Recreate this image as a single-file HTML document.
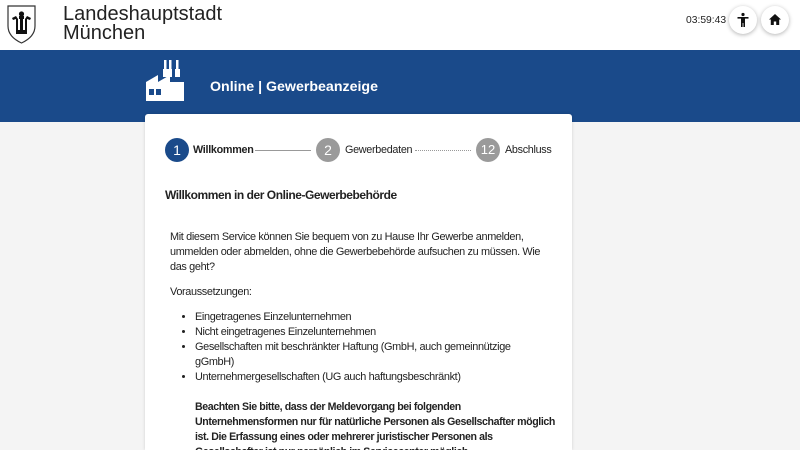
<!DOCTYPE html>
<html><head><meta charset="utf-8"><style>
*{margin:0;padding:0;box-sizing:border-box}
html,body{width:800px;height:450px;overflow:hidden}
body{background:#f4f4f4;font-family:"Liberation Sans",sans-serif;color:#222;position:relative}
.top{position:absolute;left:0;top:0;width:800px;height:50px;background:#fff}
.city{position:absolute;left:63px;top:5px;font-size:20px;line-height:19px;color:#222}
.time{position:absolute;left:686px;top:15px;font-size:10.3px;color:#222}
.btn{position:absolute;top:6px;width:28px;height:28px;border-radius:50%;background:#fff;box-shadow:0 1px 4px rgba(0,0,0,.3)}
.banner{position:absolute;left:0;top:50px;width:800px;height:72px;background:#1a4a8a}
.btitle{position:absolute;left:210px;top:79px;color:#fff;font-weight:bold;font-size:14.2px}
.card{position:absolute;left:145px;top:114px;width:427px;height:336px;background:#fff;box-shadow:0 0 3px rgba(0,0,0,.15);border-radius:3px 3px 0 0}
.c{position:absolute;width:24px;height:24px;border-radius:50%;color:#fff;font-size:14px;text-align:center;line-height:24px}
.sl{position:absolute;font-size:10.8px;letter-spacing:-0.3px}
p,li{font-size:10.9px;line-height:15px;white-space:nowrap;letter-spacing:-0.35px}
</style></head><body>
<div class="top">
<svg style="position:absolute;left:6px;top:4px" width="31" height="40" viewBox="0 0 31 40"><path d="M2 2H29V22C29 31 22 36 15.5 39C9 36 2 31 2 22Z" fill="#fff" stroke="#333" stroke-width="1.2"/><path d="M6 14L10 12L12 15V26H14V15h3V26h2V15L21 12L25 14L24 16L21 15V30H10V15L7 16Z" fill="#111"/><circle cx="15.5" cy="10" r="2.6" fill="#111"/><path d="M13 12h5v3h-5z" fill="#111"/></svg>
<div class="city">Landeshauptstadt<br>München</div>
<div class="time">03:59:43</div>
<div class="btn" style="left:729px"><svg width="28" height="28" viewBox="0 0 28 28"><circle cx="14" cy="8.5" r="1.6" fill="#111"/><path d="M8.5 11h11v1.6h-3.5V21h-1.6v-4h-0.8v4h-1.6v-8.4H8.5z" fill="#111"/></svg></div>
<div class="btn" style="left:761px"><svg width="28" height="28" viewBox="0 0 28 28"><path d="M14 8L8 13.5h1.8V19h3v-3.5h2.4V19h3v-5.5H20z" fill="#111"/></svg></div>
</div>
<div class="banner">
<svg style="position:absolute;left:145px;top:10px" width="40" height="42" viewBox="0 0 40 42"><path d="M19 0h2.5v9h-2.5zM24 0h2.5v9h-2.5zM31 0h2.5v9h-2.5z" fill="#fff"/><path d="M18 9h9v8h-9zM30 9h5v8h-5z" fill="#fff"/><path d="M1 41V22l12-7v7l12-7v7h14v19zM4 29v6h5v-6zM11 29v6h5v-6z" fill="#fff" fill-rule="evenodd"/></svg>
</div>
<div class="btitle">Online | Gewerbeanzeige</div>
<div class="card">
<div class="c" style="left:20px;top:24px;background:#1a4a8a">1</div>
<div class="sl" style="left:48px;top:30px;font-weight:bold">Willkommen</div>
<div style="position:absolute;left:110px;top:36px;width:56px;border-top:1px solid #999"></div>
<div class="c" style="left:171px;top:24px;background:#9a9a9a">2</div>
<div class="sl" style="left:200px;top:30px">Gewerbedaten</div>
<div style="position:absolute;left:270px;top:36px;width:56px;border-top:1px dotted #999"></div>
<div class="c" style="left:331px;top:24px;background:#9a9a9a;font-size:13px">12</div>
<div class="sl" style="left:360px;top:30px">Abschluss</div>
<div style="position:absolute;left:20px;top:74px;font-weight:bold;font-size:12px;letter-spacing:-0.45px">Willkommen in der Online-Gewerbebehörde</div>
<div style="position:absolute;left:25px;top:116px;width:380px">
<p>Mit diesem Service können Sie bequem von zu Hause Ihr Gewerbe anmelden,<br>ummelden oder abmelden, ohne die Gewerbebehörde aufsuchen zu müssen. Wie<br>das geht?</p>
<p style="margin-top:10px">Voraussetzungen:</p>
<ul style="margin-top:10px;padding-left:25px">
<li>Eingetragenes Einzelunternehmen</li>
<li>Nicht eingetragenes Einzelunternehmen</li>
<li>Gesellschaften mit beschränkter Haftung (GmbH, auch gemeinnützige<br>gGmbH)</li>
<li>Unternehmergesellschaften (UG auch haftungsbeschränkt)</li>
</ul>
<p style="margin-top:15px;padding-left:25px;font-weight:bold;font-size:10.6px;letter-spacing:-0.4px">Beachten Sie bitte, dass der Meldevorgang bei folgenden<br>Unternehmensformen nur für natürliche Personen als Gesellschafter möglich<br>ist. Die Erfassung eines oder mehrerer juristischer Personen als<br>Gesellschafter ist nur persönlich im Servicecenter möglich.</p>
</div>
</div>
</body></html>
